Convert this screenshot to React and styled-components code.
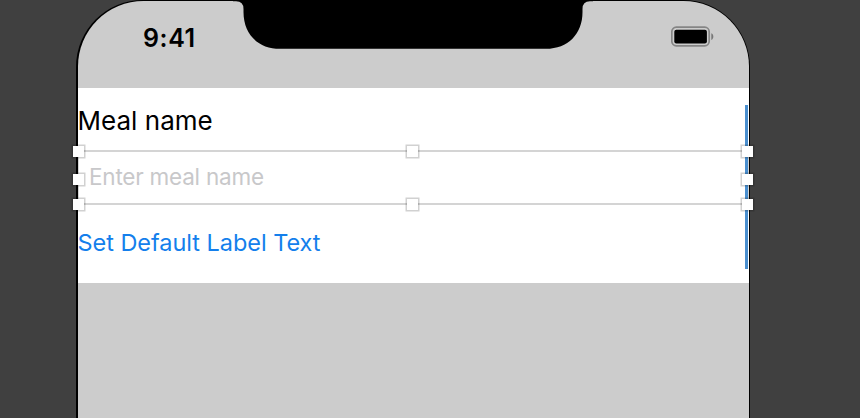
import React from "react";
import styled, { createGlobalStyle } from "styled-components";

const GlobalStyle = createGlobalStyle`
  * { box-sizing: border-box; }
  body {
    margin: 0;
    overflow: hidden;
    background: #404040;
    font-family: Inter, "Liberation Sans", sans-serif;
  }
`;

const Canvas = styled.main`
  display: flex;
  height: 418px;
  padding-left: 76px;
  overflow: hidden;
  background: #404040;
`;

const Phone = styled.section`
  position: relative;
  flex: none;
  width: 674px;
  height: 520px;
  padding: 1px 1.5px;
  background: #000;
  border-radius: 67px 67px 0 0;
`;

const Screen = styled.div`
  display: flex;
  flex-direction: column;
  height: 100%;
  background: #ccc;
  border-radius: 65.5px 65.5px 0 0;
`;

const StatusBar = styled.header`
  position: relative;
  display: flex;
  justify-content: space-between;
  align-items: flex-start;
  height: 87px;
  padding: 20px 35px 0 65.5px;
`;

const Clock = styled.time`
  font-size: 25px;
  line-height: 34px;
  font-weight: 600;
  letter-spacing: 0.6px;
`;

const Battery = styled.svg`
  display: block;
  margin-top: 5px;
`;

const Notch = styled.svg`
  position: absolute;
  left: 155px;
  top: -1px;
`;

const Form = styled.div`
  position: relative;
  display: flex;
  flex-direction: column;
  height: 195px;
  padding-top: 16px;
  background: #fff;
`;

const Label = styled.label`
  height: 46px;
  font-size: 26px;
  line-height: 34px;
  letter-spacing: 0.03px;
  color: #000;
`;

const Field = styled.div`
  position: relative;
  display: flex;
  align-items: center;
  height: 55px;
  padding: 0 0 1px 10.5px;
  border: 2px solid #d4d4d4;
  border-width: 2px 1px;
  font-size: 22.5px;
  color: #c8c8ca;
`;

const Placeholder = styled.span`
  letter-spacing: -0.22px;
  line-height: 30px;
`;

const Selection = styled.div`
  position: absolute;
  inset: -1px 0.5px -1px -0.5px;
`;

const Handle = styled.i`
  position: absolute;
  left: ${(p) => p.$x};
  top: ${(p) => p.$y};
  width: 11px;
  height: 11px;
  margin: -5.5px 0 0 -5.5px;
  background: #fff;
  box-shadow: 0 0 0 1.5px rgba(0, 0, 0, 0.18);
`;

const Guide = styled.span`
  position: absolute;
  right: 0.6px;
  top: 17px;
  width: 3px;
  height: 164px;
  background: #4a8fcf;
`;

const LinkButton = styled.button`
  align-self: flex-start;
  margin: 22px 0 0;
  padding: 0;
  border: 0;
  background: none;
  font: 400 23.5px/32px Inter, "Liberation Sans", sans-serif;
  letter-spacing: -0.04px;
  color: #147fec;
`;

const HANDLES = [
  ["0%", "0%"], ["50%", "0%"], ["100%", "0%"],
  ["0%", "54%"], ["100%", "54%"],
  ["0%", "100%"], ["50%", "100%"], ["100%", "100%"],
];

export default function App() {
  return (
    <>
      <GlobalStyle />
      <Canvas>
        <Phone>
          <Screen>
            <StatusBar>
              <Clock>9:41</Clock>
              <Notch width="360" height="50" viewBox="233 0 360 50">
                <path d="M233 0H593V1.2H590Q582.5 1.2 582.5 9V12C582.5 34 568 48.8 546 48.8H280C258 48.8 243.5 34 243.5 12V9Q243.5 1.2 236 1.2H233Z" fill="#000" />
              </Notch>
              <Battery width="43" height="22" viewBox="0 0 43 22">
                <rect x="0.8" y="1.2" width="37.4" height="18.6" rx="4.5" fill="none" stroke="#858585" strokeWidth="1.7" />
                <rect x="3.3" y="3.8" width="32.6" height="13.6" rx="2" fill="#000" />
                <path d="M40.3 7.2C43 8.3 43 12.8 40.3 13.9Z" fill="#777" />
              </Battery>
            </StatusBar>
            <Form>
              <Guide />
              <Label>Meal name</Label>
              <Field>
                <Placeholder>Enter meal name</Placeholder>
                <Selection>
                  {HANDLES.map(([x, y]) => (
                    <Handle key={x + y} $x={x} $y={y} />
                  ))}
                </Selection>
              </Field>
              <LinkButton>Set Default Label Text</LinkButton>
            </Form>
          </Screen>
        </Phone>
      </Canvas>
    </>
  );
}
